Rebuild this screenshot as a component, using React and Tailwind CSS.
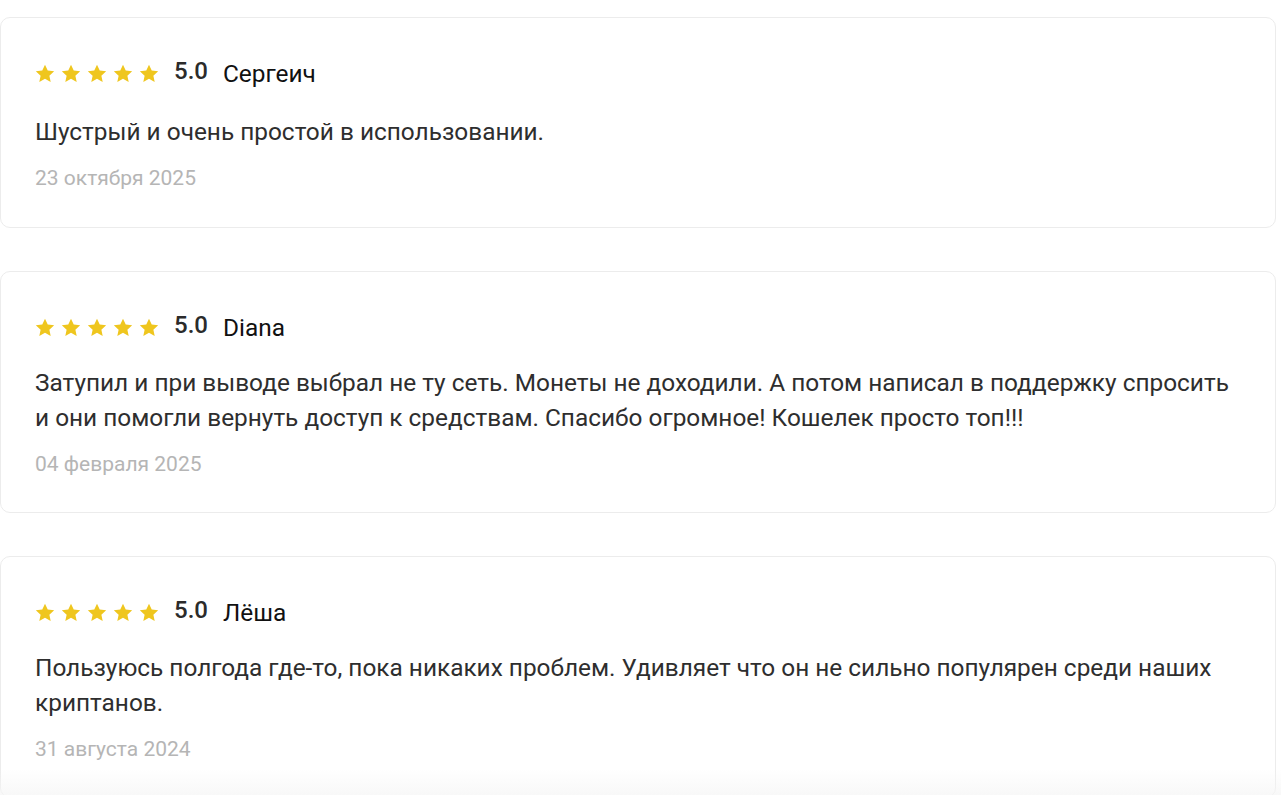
import React from "react";

const reviews = [
  { name: "Сергеич", text: "Шустрый и очень простой в использовании.", date: "23 октября 2025", first: true },
  {
    name: "Diana",
    text: "Затупил и при выводе выбрал не ту сеть. Монеты не доходили. А потом написал в поддержку спросить и они помогли вернуть доступ к средствам. Спасибо огромное! Кошелек просто топ!!!",
    date: "04 февраля 2025",
  },
  {
    name: "Лёша",
    text: "Пользуюсь полгода где-то, пока никаких проблем. Удивляет что он не сильно популярен среди наших криптанов.",
    date: "31 августа 2024",
  },
];

function Star() {
  return (
    <svg width="20" height="19" viewBox="0 0 24 23" className="shrink-0">
      <path
        d="M12 0.8l3.3 7.1 7.8 0.9-5.8 5.3 1.6 7.7L12 17.9l-6.9 3.9 1.6-7.7L0.9 8.8l7.8-0.9z"
        fill="#EFC61E"
      />
    </svg>
  );
}

function Card({ r }) {
  return (
    <div
      className={
        "rounded-[10px] border border-[#ececec] bg-white pl-[34px] pr-[34px] pt-[36px] " +
        (r.first ? "pb-[37px]" : "pb-[36px]")
      }
    >
      <div className="flex h-[38px] items-center">
        <div className="flex gap-[6px]">
          <Star />
          <Star />
          <Star />
          <Star />
          <Star />
        </div>
        <span className="ml-[15px] text-[24px] font-medium leading-[38px] text-[#2b2b2b] -translate-y-[2px]">5.0</span>
        <span className="ml-[15px] text-[24.4px] leading-[38px] text-[#111] translate-y-[1px]">{r.name}</span>
      </div>
      <p className={(r.first ? "mt-[22px]" : "mt-[19px]") + " text-[24.4px] leading-[35px] text-[#2e2e2e]"}>{r.text}</p>
      <p className="mt-[17px] text-[21px] leading-[24px] text-[#b5b5b5]">{r.date}</p>
    </div>
  );
}

export default function App() {
  return (
    <div
      className="relative h-[795px] w-[1281px] overflow-hidden bg-white pt-[17px]"
      style={{ fontFamily: "Roboto, 'Noto Sans', sans-serif" }}
    >
      <div className="flex w-[1276px] flex-col gap-[43px]">
        {reviews.map((r, i) => (
          <Card key={i} r={r} />
        ))}
      </div>
      <div className="absolute bottom-0 left-0 h-[26px] w-full bg-gradient-to-b from-white/0 to-[#f5f5f5]/70" />
    </div>
  );
}
